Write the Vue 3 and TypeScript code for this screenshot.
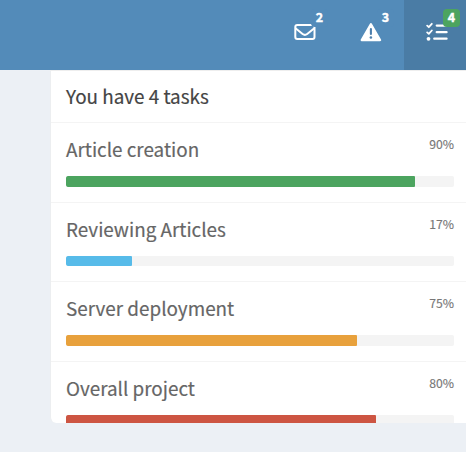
<script setup lang="ts">
interface Task {
  title: string
  percent: number
  color: string
}

const tasks: Task[] = [
  { title: 'Article creation', percent: 90, color: 'green' },
  { title: 'Reviewing Articles', percent: 17, color: 'aqua' },
  { title: 'Server deployment', percent: 75, color: 'yellow' },
  { title: 'Overall project', percent: 80, color: 'red' },
]
</script>

<template>
  <div class="page">
    <header class="navbar">
      <button class="nav-item" aria-label="Messages">
        <svg class="icon" viewBox="0 0 22 22">
          <rect x="1.3" y="4" width="19.2" height="14" rx="2" fill="none" stroke="#fff" stroke-width="2" />
          <path d="M1.5 7.2 L8.6 13 Q10.9 14.8 13.2 13 L20.3 7.2" fill="none" stroke="#fff" stroke-width="2" />
        </svg>
        <span class="label label-messages">2</span>
      </button>
      <button class="nav-item" aria-label="Alerts">
        <svg class="icon" viewBox="0 0 22 22">
          <path d="M10.9 3.3 L20 19 H1.8 Z" fill="#fff" stroke="#fff" stroke-width="2.4" stroke-linejoin="round" />
          <path d="M10.9 8 V13" fill="none" stroke="#4c7fad" stroke-width="2.1" stroke-linecap="round" />
          <circle cx="10.9" cy="16.5" r="1.3" fill="#4c7fad" />
        </svg>
        <span class="label label-alerts">3</span>
      </button>
      <button class="nav-item active" aria-label="Tasks">
        <svg class="icon" viewBox="0 0 22 22">
          <path d="M1.2 4.7 L2.8 6.2 L5.8 2.8 M1.2 11.4 L2.8 12.9 L5.8 9.5" fill="none" stroke="#fff" stroke-width="1.8" stroke-linecap="round" stroke-linejoin="round" />
          <circle cx="2.5" cy="17.8" r="1.9" fill="#fff" />
          <path d="M10.7 4.6 H20.6 M10.7 11.2 H20.6 M8.2 17.7 H20.6" fill="none" stroke="#fff" stroke-width="2.2" stroke-linecap="round" />
        </svg>
        <span class="label label-tasks">4</span>
      </button>
    </header>
    <section class="menu">
      <h2 class="menu-header">You have 4 tasks</h2>
      <ul class="task-list">
        <li v-for="task in tasks" :key="task.title" class="task">
          <div class="task-heading">
            <span class="title">{{ task.title }}</span>
            <span class="percent">{{ task.percent }}%</span>
          </div>
          <div class="track">
            <div class="bar" :class="task.color" :style="{ width: task.percent + '%' }"></div>
          </div>
        </li>
      </ul>
    </section>
  </div>
</template>

<style>
body {
  background: #ecf0f5;
}
</style>

<style scoped>
.page {
  box-sizing: border-box;
  height: 452px;
  overflow: hidden;
  background: #ecf0f5;
  font-family: "Noto Sans CJK SC", "Noto Sans", sans-serif;
}
.navbar {
  display: flex;
  justify-content: flex-end;
  height: 70px;
  background: #538bb9;
}
.nav-item {
  position: relative;
  box-sizing: border-box;
  width: 66px;
  height: 70px;
  padding: 21px 22px 27px;
  border: 0;
  background: transparent;
  font-family: inherit;
}
.nav-item:last-child {
  width: 62px;
  padding-right: 18px;
}
.active {
  background: #4a7ca5;
}
.icon {
  display: block;
  width: 22px;
  height: 22px;
}
.label {
  position: absolute;
  top: 9px;
  left: 39px;
  width: 17px;
  height: 18px;
  border-radius: 4px;
  background: #538bb9;
  color: #fff;
  font-size: 12.5px;
  font-weight: 700;
  line-height: 16px;
  text-align: center;
  -webkit-text-stroke: 0.4px #fff;
}
.label-tasks {
  background: #4ca45f;
}
.menu {
  box-sizing: border-box;
  height: 353px;
  margin-left: 50px;
  overflow: hidden;
  border-left: 1px solid #eceef0;
  border-top: 1px solid #eeeeee;
  border-radius: 0 0 0 6px;
  background: #fff;
}
.menu-header {
  box-sizing: border-box;
  height: 52px;
  margin: 0;
  padding: 0 15px;
  border-bottom: 1px solid #f4f4f4;
  color: #444;
  font-size: 18.87px;
  font-weight: 400;
  line-height: 50px;
  -webkit-text-stroke: 0.18px #444;
}
.task-list {
  margin: 0;
  padding: 0;
  list-style: none;
}
.task {
  box-sizing: border-box;
  height: 79.5px;
  padding: 13px 12px 0 15px;
  border-bottom: 1px solid #f4f4f4;
}
.task-heading {
  display: flex;
  justify-content: space-between;
  height: 40px;
  color: #666;
}
.title {
  font-size: 18.87px;
  line-height: 26px;
  -webkit-text-stroke: 0.18px #666;
}
.percent {
  color: #777;
  font-size: 12.2px;
  line-height: 17px;
  -webkit-text-stroke: 0.15px #777;
}
.track {
  height: 10.5px;
  overflow: hidden;
  border-radius: 2px;
  background: #f4f4f4;
}
.bar {
  height: 100%;
  border-radius: 1px;
}
.green { background: #4ca45f; }
.aqua { background: #57bbe9; }
.yellow { background: #e8a13c; }
.red { background: #cd5542; }
</style>
